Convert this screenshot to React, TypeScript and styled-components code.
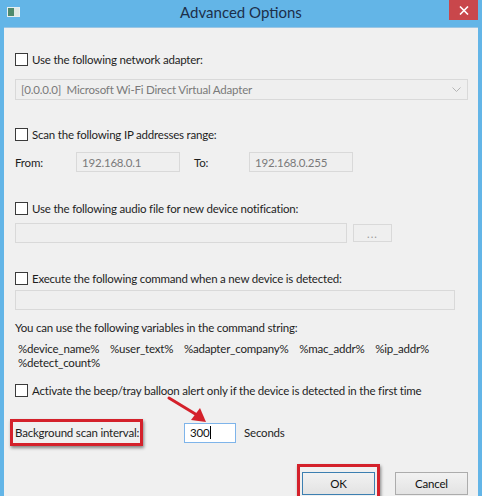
import React from "react";
import styled, { createGlobalStyle } from "styled-components";

const Global = createGlobalStyle`
  html, body { margin: 0; padding: 0; background: #62b3e6; }
  body { font-family: Lato, "Noto Sans", Arial, sans-serif; }
`;

const Frame = styled.div`
  position: relative;
  width: 482px;
  height: 496px;
  overflow: hidden;
  background: #63b5e7;
  display: flex;
  flex-direction: column;
`;

const TitleBar = styled.div`
  height: 27px;
  flex: none;
  display: flex;
  align-items: flex-start;
  position: relative;
`;

const AppIcon = styled.div`
  margin: 7px 0 0 7px;
  width: 13px;
  height: 10px;
  background: linear-gradient(90deg, #4e8a6d 0 55%, #dfe8e4 55% 100%);
  border: 1px solid #e7eef0;
  box-sizing: border-box;
`;

const Title = styled.div`
  flex: 1;
  text-align: center;
  font-size: 15px;
  line-height: 25px;
  color: #1c2f4a;
  padding-left: 13px;
`;

const CloseBtn = styled.div`
  width: 29px;
  height: 20px;
  margin-right: 4px;
  background: #c9474b;
  color: #fff;
  display: flex;
  align-items: center;
  justify-content: center;
`;

const Client = styled.div`
  flex: 1;
  margin: 0 4px;
  background: #f0f0f0;
  border-top: 1px solid #9bc6e4;
  padding: 0 0 0 11px;
  display: flex;
  flex-direction: column;
  font-size: 11.5px;
  letter-spacing: -0.2px;
  color: #1e1e1e;
`;

const CheckRow = styled.label<{ $mt: number }>`
  display: flex;
  align-items: center;
  height: 16px;
  flex: none;
  margin-top: ${(p) => p.$mt}px;
  gap: 4px;
  white-space: nowrap;
`;

const Box = styled.span`
  width: 13px;
  height: 13px;
  box-sizing: border-box;
  border: 1px solid #3a3a3a;
  background: #fff;
  flex: none;
`;

const Combo = styled.div<{ $mt: number }>`
  margin-top: ${(p) => p.$mt}px;
  width: 453px;
  height: 21px;
  flex: none;
  box-sizing: border-box;
  border: 1px solid #d9d9d9;
  background: #efefef;
  color: #7a7a7a;
  display: flex;
  align-items: center;
  padding: 0 6px 0 5px;
  justify-content: space-between;
  white-space: nowrap;
`;

const Row = styled.div<{ $mt: number; $h: number }>`
  display: flex;
  align-items: center;
  flex: none;
  margin-top: ${(p) => p.$mt}px;
  height: ${(p) => p.$h}px;
  white-space: nowrap;
`;

const Field = styled.div<{ $w: number; $disabled?: boolean }>`
  width: ${(p) => p.$w}px;
  height: 20px;
  box-sizing: border-box;
  border: 1px solid ${(p) => (p.$disabled ? "#d9d9d9" : "#7eb4ea")};
  background: ${(p) => (p.$disabled ? "#efefef" : "#fff")};
  color: ${(p) => (p.$disabled ? "#7a7a7a" : "#111")};
  display: flex;
  align-items: center;
  padding-left: 5px;
  flex: none;
`;

const Label = styled.span<{ $w?: number }>`
  box-sizing: border-box;
  width: ${(p) => (p.$w ? `${p.$w}px` : "auto")};
  flex: none;
`;

const SmallBtn = styled.div`
  width: 39px;
  height: 18px;
  margin-left: 6px;
  box-sizing: border-box;
  border: 1px solid #d9d9d9;
  background: #efefef;
  color: #9a9a9a;
  font-size: 11px;
  display: flex;
  align-items: center;
  justify-content: center;
  letter-spacing: 1px;
`;

const Text = styled.div<{ $mt: number }>`
  margin-top: ${(p) => p.$mt}px;
  line-height: 16px;
  white-space: nowrap;
`;

const Vars = styled.div`
  margin-top: 6px;
  padding-left: 3px;
  line-height: 14px;
  word-spacing: 8px;
  white-space: nowrap;
`;

const RedBox = styled.div`
  border: 3px solid #d4212b;
  box-shadow: 1px 2px 3px rgba(0, 0, 0, 0.45);
  display: flex;
  align-items: center;
`;

const LabelBox = styled(RedBox)`
  margin-left: -5px;
  width: 133px;
  height: 27px;
  box-sizing: border-box;
  padding-left: 2px;
`;

const Caret = styled.span`
  display: inline-block;
  width: 1px;
  height: 13px;
  background: #000;
  margin-left: 1px;
`;

const Buttons = styled.div`
  margin-top: 18px;
  display: flex;
  align-items: flex-start;
  flex: none;
`;

const OkBox = styled(RedBox)`
  margin-left: 282px;
  padding: 5px 2px 10px 2px;
`;

const Btn = styled.div<{ $default?: boolean }>`
  width: 73px;
  height: 23px;
  box-sizing: border-box;
  border: 1px solid ${(p) => (p.$default ? "#3c7fb1" : "#acacac")};
  background: linear-gradient(#f2f2f2, #e3e3e3);
  display: flex;
  align-items: center;
  justify-content: center;
  color: #111;
`;

const CancelBtn = styled(Btn)`
  margin-left: 15px;
  margin-top: 8px;
`;

const Arrow = styled.svg`
  position: absolute;
  left: 165px;
  top: 393px;
`;

export default function App() {
  return (
    <>
      <Global />
      <Frame>
        <TitleBar>
          <AppIcon />
          <Title>Advanced Options</Title>
          <CloseBtn>
            <svg width="10" height="9" viewBox="0 0 10 9">
              <path d="M1 0.5 L9 8.5 M9 0.5 L1 8.5" stroke="#fff" strokeWidth="1.6" />
            </svg>
          </CloseBtn>
        </TitleBar>
        <Client>
          <CheckRow $mt={23}>
            <Box />
            Use the following network adapter:
          </CheckRow>
          <Combo $mt={12}>
            <span>[0.0.0.0]&nbsp; Microsoft Wi-Fi Direct Virtual Adapter</span>
            <svg width="9" height="6" viewBox="0 0 9 6">
              <path d="M0.5 0.5 L4.5 4.5 L8.5 0.5" fill="none" stroke="#b5b5b5" strokeWidth="1" />
            </svg>
          </Combo>
          <CheckRow $mt={26}>
            <Box />
            Scan the following IP addresses range:
          </CheckRow>
          <Row $mt={10} $h={20}>
            <Label $w={61}>From:</Label>
            <Field $w={104} $disabled>192.168.0.1</Field>
            <Label $w={69} style={{ paddingLeft: 14 }}>To:</Label>
            <Field $w={104} $disabled>192.168.0.255</Field>
          </Row>
          <CheckRow $mt={28}>
            <Box />
            Use the following audio file for new device notification:
          </CheckRow>
          <Row $mt={7} $h={20}>
            <Field $w={332} $disabled />
            <SmallBtn>...</SmallBtn>
          </Row>
          <CheckRow $mt={27}>
            <Box />
            Execute the following command when a new device is detected:
          </CheckRow>
          <Row $mt={4} $h={20}>
            <Field $w={440} $disabled />
          </Row>
          <Text $mt={10}>You can use the following variables in the command string:</Text>
          <Vars>
            %device_name% %user_text% %adapter_company% %mac_addr% %ip_addr%
            <br />
            %detect_count%
          </Vars>
          <CheckRow $mt={12}>
            <Box />
            Activate the beep/tray balloon alert only if the device is detected in the first time
          </CheckRow>
          <Row $mt={21} $h={27}>
            <LabelBox>Background scan interval:</LabelBox>
            <Field $w={52} style={{ marginLeft: 41 }}>
              300
              <Caret />
            </Field>
            <Label style={{ marginLeft: 8 }}>Seconds</Label>
          </Row>
          <Buttons>
            <OkBox>
              <Btn $default>OK</Btn>
            </OkBox>
            <CancelBtn>Cancel</CancelBtn>
          </Buttons>
        </Client>
        <Arrow width="50" height="34" viewBox="0 0 50 34">
          <path d="M4 5 L32 22" stroke="#d4212b" strokeWidth="3" strokeLinecap="round" />
          <path d="M41 29 L26 27 L35 15 Z" fill="#d4212b" />
        </Arrow>
      </Frame>
    </>
  );
}
